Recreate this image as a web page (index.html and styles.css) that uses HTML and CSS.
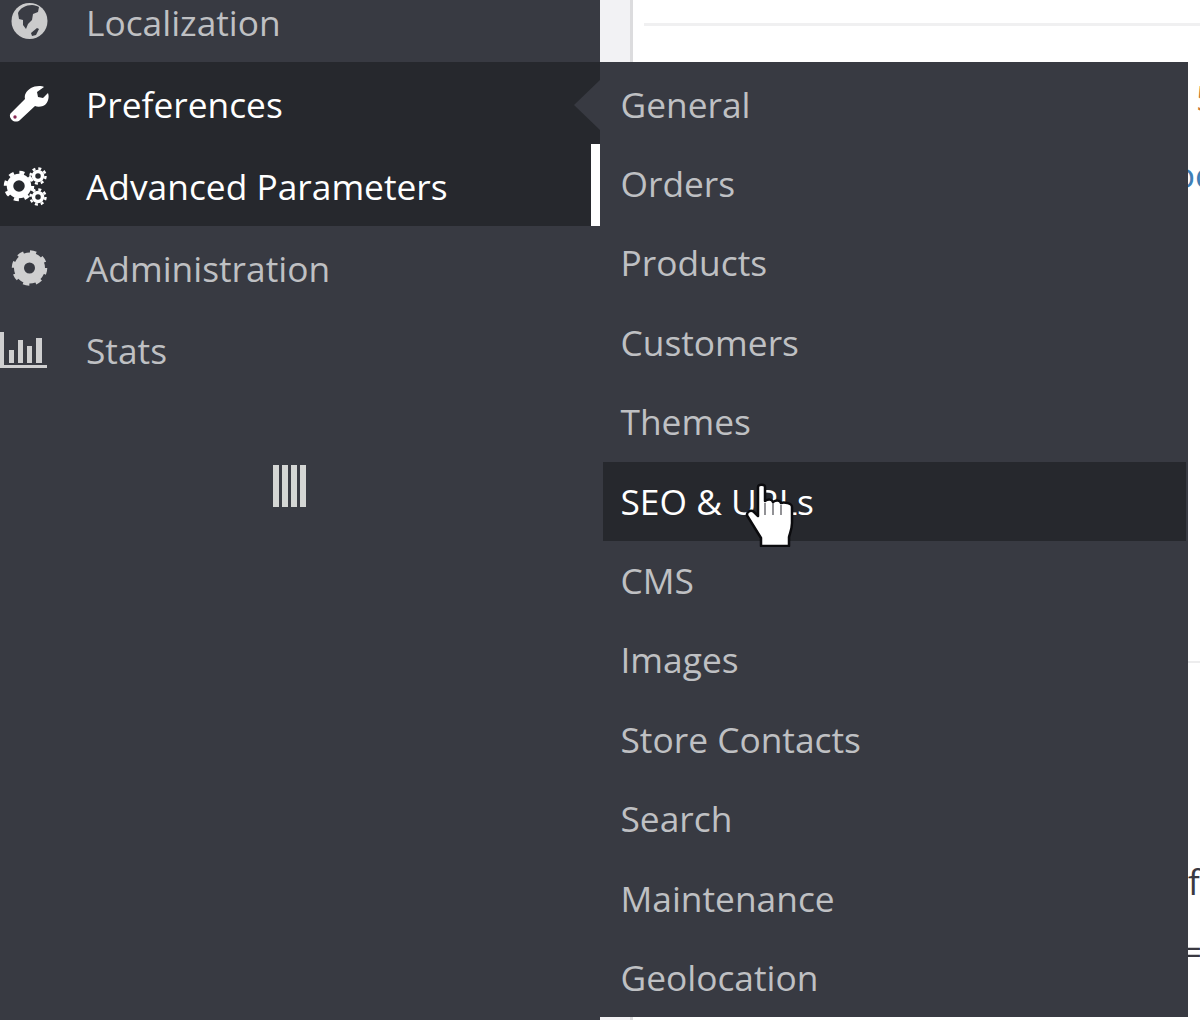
FILE: index.html
```html
<!DOCTYPE html>
<html lang="en">
<head>
<meta charset="utf-8">
<title>Back office menu</title>
<link rel="stylesheet" href="styles.css">
</head>
<body>
<div class="page">
  <nav class="sidebar">
    <ul class="menu">
      <li class="menu-item">
        <span class="icon"><svg width="50" height="44" viewBox="0 0 50 44"><circle cx="29.500" cy="21" r="18" fill="#cbcbcc"/><path d="M18 13c2-5 8-8 14-8 3 0 5 1 7 2l-1 5-5 2-1 6-4 4-2 5-3-4v-5l-4-1z" fill="#3a3c44"/><path d="M31 33l6-5 2 1-3 6-4 1z" fill="#3a3c44"/></svg></span>
        <span class="label">Localization</span>
      </li>
      <li class="menu-item active">
        <span class="icon"><svg width="50" height="44" viewBox="0 0 50 44"><path d="M31 6c3-2 10-3 13-1l-7 5 1 5 5 1 5-5c2 5-1 12-5 13-3 1-6 1-8 0L20 38c-2 2-6 2-8 0s-3-5-1-7l14-14c-1-4 1-8 6-11z" fill="#fff"/><circle cx="15" cy="35" r="1.700" fill="#8a2a55"/></svg></span>
        <span class="label">Preferences</span>
      </li>
      <li class="menu-item active marked">
        <span class="icon"><svg width="50" height="44" viewBox="0 0 50 44"><g fill="none" stroke="#fff"><circle cx="19" cy="22" r="9" stroke-width="6.500"/><circle cx="19" cy="22" r="13.500" stroke-width="3.500" stroke-dasharray="5 5.600"/><circle cx="38" cy="12" r="4.500" stroke-width="3.500"/><circle cx="38" cy="12" r="7.500" stroke-width="2.500" stroke-dasharray="3 2.900"/><circle cx="38" cy="33" r="4.500" stroke-width="3.500"/><circle cx="38" cy="33" r="7.500" stroke-width="2.500" stroke-dasharray="3 2.900"/></g></svg></span>
        <span class="label">Advanced Parameters</span>
      </li>
      <li class="menu-item">
        <span class="icon"><svg width="50" height="44" viewBox="0 0 50 44"><g fill="none" stroke="#cfcfd0"><circle cx="29.500" cy="22" r="10.500" stroke-width="10"/><circle cx="29.500" cy="22" r="15.500" stroke-width="4.500" stroke-dasharray="6 6.170"/></g></svg></span>
        <span class="label">Administration</span>
      </li>
      <li class="menu-item">
        <span class="icon"><svg width="50" height="44" viewBox="0 0 50 44"><path d="M0 4h4v33h43v3H0z" fill="#cfcfd0"/><path d="M9 22h5v13H9zM18 12h5v23h-5zM27 18h5v17h-5zM36 10h6v25h-6z" fill="#cfcfd0"/></svg></span>
        <span class="label">Stats</span>
      </li>
    </ul>
    <div class="collapse"><svg width="36" height="42" viewBox="0 0 36 42"><path d="M1 0h6v42H1zM10 0h6v42h-6zM19 0h6v42h-6zM28 0h6v42h-6z" fill="#d4d6d4"/></svg></div>
  </nav>
  <main class="content">
    <div class="panel">
      <div class="rule-top"></div>
      <div class="rule-mid"></div>
    </div>
    <span class="peek peek-orange">5</span>
    <span class="peek peek-blue">oc</span>
    <span class="peek peek-f">f</span>
    <span class="peek peek-dash">=</span>
  </main>
  <ul class="submenu">
    <li>General</li>
    <li>Orders</li>
    <li>Products</li>
    <li>Customers</li>
    <li>Themes</li>
    <li class="hover">SEO &amp; URLs</li>
    <li>CMS</li>
    <li>Images</li>
    <li>Store Contacts</li>
    <li>Search</li>
    <li>Maintenance</li>
    <li>Geolocation</li>
  </ul>
  <svg class="cursor" width="50" height="64" viewBox="0 0 50 64"><path d="M13 4c0-3 7-3 7 0v14c3-2 7-2 8 1 3-2 7-2 8 1 3-1 11 0 11 4v16c0 6-2 10-3 14v9H16v-8L3 34c-3-4 2-8 6-5l4 4z" fill="#fff" stroke="#0b0b0e" stroke-width="2.500" stroke-linejoin="round"/><path d="M20 20v12M28 20v12M36 22v10" stroke="#77777c" stroke-width="1.600"/></svg>
</div>
</body>
</html>
```
FILE: styles.css
```css
* { box-sizing: border-box; }
html, body { margin: 0; padding: 0; height: 100%; overflow: hidden; background: #fff; }
body { font-family: "Open Sans", "DejaVu Sans", sans-serif; }
.page { position: relative; display: flex; width: 1200px; height: 1020px; overflow: hidden; }
.sidebar { width: 600px; flex: none; background: #383a42; }
.menu { list-style: none; margin: -20px 0 0; padding: 0; }
.menu-item { position: relative; display: flex; align-items: center; height: 82px; padding-left: 86px; color: #bfc0c3; font-size: 35.35px; }
.menu-item.active { background: #26282d; color: #fff; }
.menu-item.marked::after { content: ""; position: absolute; right: 0; top: 0; width: 9px; height: 100%; background: #fff; }
.icon { position: absolute; left: 0; top: 50%; height: 44px; margin-top: -21px; display: flex; }
.label { display: block; position: relative; top: 1px; }
.collapse { display: flex; justify-content: flex-start; padding: 75px 0 0 272px; }
.content { flex: 1; position: relative; background: #f2f2f4; }
.panel { position: absolute; left: 30px; top: 0; right: 0; bottom: 0; background: #fff; border-left: 3px solid #dcdcde; }
.rule-top { position: absolute; left: 11px; right: 0; top: 23px; height: 3px; background: #f0f0f1; }
.rule-mid { position: absolute; left: 11px; right: 0; top: 661px; height: 2px; background: #ededee; }
.submenu { position: absolute; left: 600px; top: 62px; width: 588px; height: 955px; margin: 0; padding: 3px 2px 0 3px; list-style: none; background: #383a42; }
.submenu::before { content: ""; position: absolute; left: -26px; top: 18px; border: 25px solid transparent; border-left: 0; border-right: 26px solid #383a42; }
.submenu li { height: 79.4px; display: flex; align-items: center; padding: 0 0 2px 17.5px; color: #bfc0c3; font-size: 35.35px; }
.submenu li.hover { background: #26282d; color: #fff; }
.peek { position: absolute; font-size: 35px; line-height: 1; }
.peek-orange { left: 596px; top: 80px; color: #c8783a; }
.peek-blue { left: 574px; top: 157px; color: #3f7fb5; }
.peek-f { left: 588px; top: 864px; color: #3a3a42; }
.peek-dash { left: 582px; top: 934px; color: #3a3a42; }
.cursor { position: absolute; left: 745px; top: 483px; }
```
